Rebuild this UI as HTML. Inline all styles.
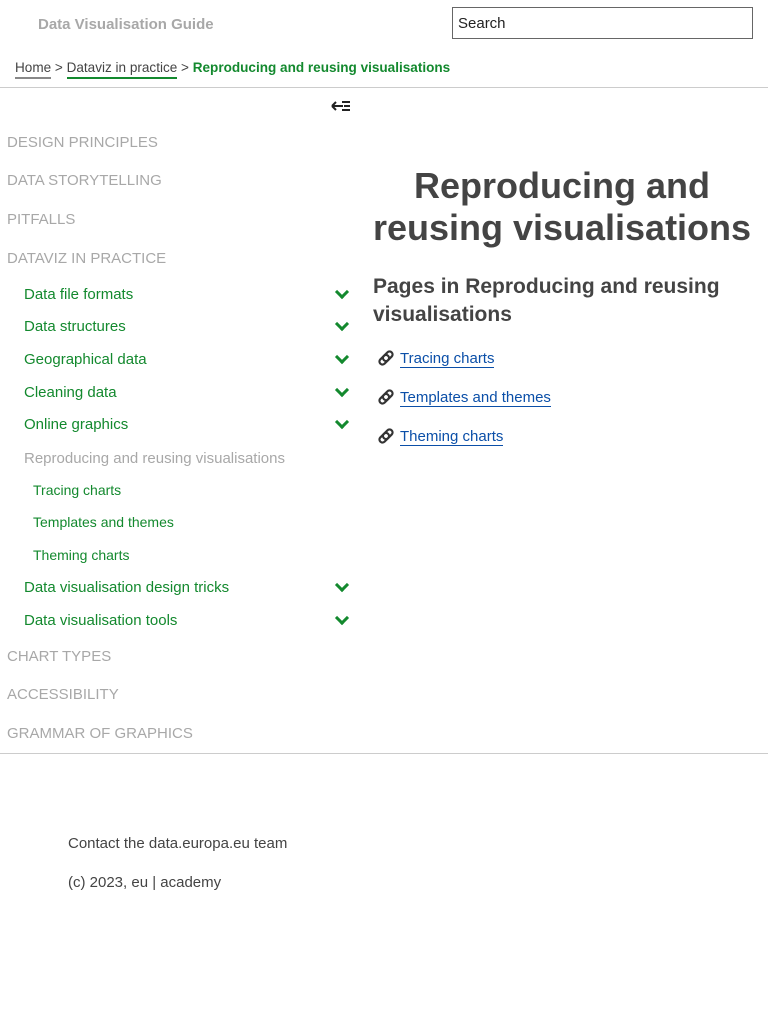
<!DOCTYPE html>
<html><head><style>
body{margin:0;width:768px;height:1024px;position:relative;font-family:"Liberation Sans",sans-serif;background:#fff;overflow:hidden}
.a{position:absolute;white-space:nowrap}
.top{font-size:15px;color:#a8a8a8;left:7px}
.g{font-size:15px;color:#13892e;left:24px}
.s{font-size:14px;color:#13892e;left:33px}
.chev{position:absolute;left:337px;width:7px;height:7px;border-right:3px solid #13892e;border-bottom:3px solid #13892e;transform:rotate(45deg)}
.lk{font-size:15px;color:#0b4fa8;left:400px;border-bottom:1px solid #0b4fa8;line-height:17px}
.ic{position:absolute;left:377px}
</style></head><body>
<div class="a" style="left:38px;top:16px;font-size:15px;font-weight:bold;color:#a8a8a8">Data Visualisation Guide</div>
<div class="a" style="left:452px;top:7px;width:301px;height:32px;border:1px solid #666;box-sizing:border-box;font-size:15px;padding:7px 5px;color:#222">Search</div>
<div class="a" style="left:15px;top:60px;font-size:13.55px;color:#444"><span style="border-bottom:2px solid #888;padding-bottom:2px">Home</span> &gt; <span style="border-bottom:2px solid #13892e;padding-bottom:2px">Dataviz in practice</span> &gt; <b style="color:#13892e">Reproducing and reusing visualisations</b></div>
<div class="a" style="left:0;top:87px;width:768px;border-top:1px solid #ccc"></div>
<svg class="a" style="left:331px;top:99px" width="20" height="14"><path d="M1 7H12M1 7L5 3M1 7L5 11" stroke="#222" stroke-width="2" fill="none"/><path d="M11 3h8M13 7h6M11 11h8" stroke="#222" stroke-width="2"/></svg>
<div class="a top" style="top:134px">DESIGN PRINCIPLES</div>
<div class="a top" style="top:172px">DATA STORYTELLING</div>
<div class="a top" style="top:211px">PITFALLS</div>
<div class="a top" style="top:250px">DATAVIZ IN PRACTICE</div>
<div class="a g" style="top:286px">Data file formats</div><div class="chev" style="top:287px"></div>
<div class="a g" style="top:318px">Data structures</div><div class="chev" style="top:319px"></div>
<div class="a g" style="top:351px">Geographical data</div><div class="chev" style="top:352px"></div>
<div class="a g" style="top:384px">Cleaning data</div><div class="chev" style="top:385px"></div>
<div class="a g" style="top:416px">Online graphics</div><div class="chev" style="top:417px"></div>
<div class="a g" style="top:450px;color:#a8a8a8">Reproducing and reusing visualisations</div>
<div class="a s" style="top:482px">Tracing charts</div>
<div class="a s" style="top:514px">Templates and themes</div>
<div class="a s" style="top:547px">Theming charts</div>
<div class="a g" style="top:579px">Data visualisation design tricks</div><div class="chev" style="top:580px"></div>
<div class="a g" style="top:612px">Data visualisation tools</div><div class="chev" style="top:613px"></div>
<div class="a top" style="top:648px">CHART TYPES</div>
<div class="a top" style="top:686px">ACCESSIBILITY</div>
<div class="a top" style="top:725px">GRAMMAR OF GRAPHICS</div>
<div class="a" style="left:0;top:753px;width:768px;border-top:1px solid #ccc"></div>
<div class="a" style="left:372px;top:165px;width:380px;text-align:center;font-size:36px;font-weight:bold;color:#444;line-height:42px;white-space:normal">Reproducing and reusing visualisations</div>
<div class="a" style="left:373px;top:273px;width:390px;font-size:21px;font-weight:bold;color:#444;line-height:28px;white-space:normal">Pages in Reproducing and reusing visualisations</div>
<svg class="ic" style="top:349px" width="18" height="18"><g fill="none" stroke="#333" stroke-width="2.2"><rect x="1" y="6" width="11" height="6" rx="3" transform="rotate(-45 9 9)"/><rect x="6" y="6" width="11" height="6" rx="3" transform="rotate(-45 9 9)"/></g></svg>
<div class="a lk" style="top:350px">Tracing charts</div>
<svg class="ic" style="top:388px" width="18" height="18"><g fill="none" stroke="#333" stroke-width="2.2"><rect x="1" y="6" width="11" height="6" rx="3" transform="rotate(-45 9 9)"/><rect x="6" y="6" width="11" height="6" rx="3" transform="rotate(-45 9 9)"/></g></svg>
<div class="a lk" style="top:389px">Templates and themes</div>
<svg class="ic" style="top:427px" width="18" height="18"><g fill="none" stroke="#333" stroke-width="2.2"><rect x="1" y="6" width="11" height="6" rx="3" transform="rotate(-45 9 9)"/><rect x="6" y="6" width="11" height="6" rx="3" transform="rotate(-45 9 9)"/></g></svg>
<div class="a lk" style="top:428px">Theming charts</div>
<div class="a" style="left:68px;top:835px;font-size:15px;color:#444">Contact the data.europa.eu team</div>
<div class="a" style="left:68px;top:874px;font-size:15px;color:#444">(c) 2023, eu | academy</div>
</body></html>
